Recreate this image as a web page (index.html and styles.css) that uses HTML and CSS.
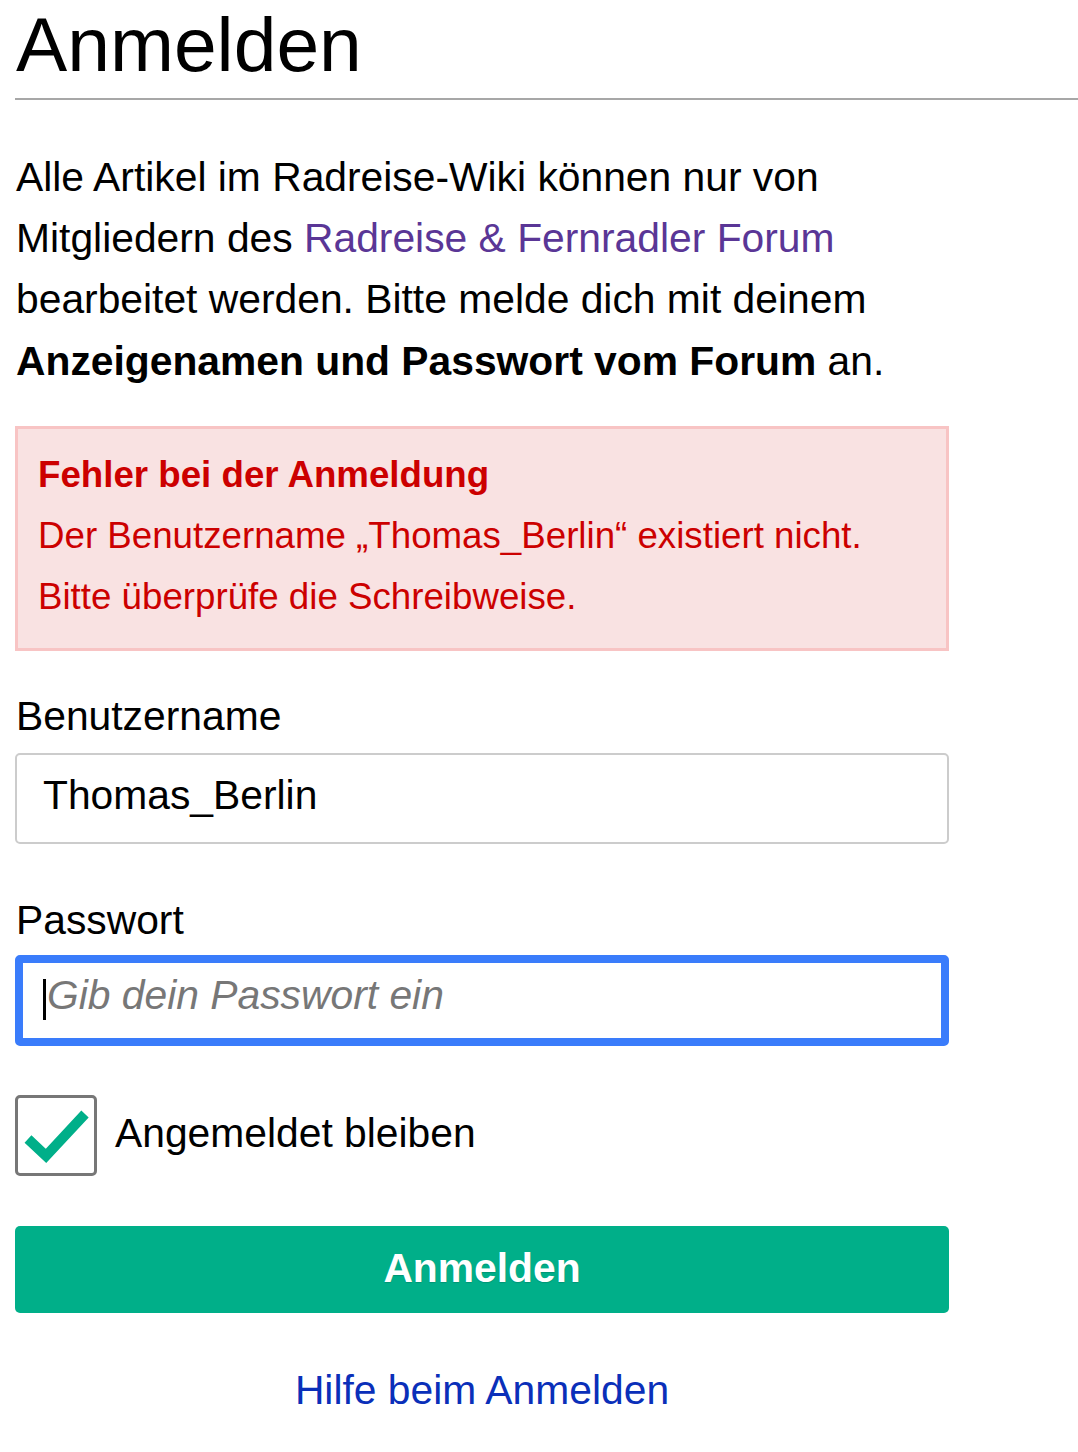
FILE: index.html
```html
<!DOCTYPE html>
<html lang="de">
<head>
<meta charset="utf-8">
<title>Anmelden</title>
<link rel="stylesheet" href="styles.css">
</head>
<body>
<h1 class="page-title">Anmelden</h1>
<div class="login">
  <p class="intro">Alle Artikel im Radreise-Wiki können nur von Mitgliedern des <a class="visited" href="#">Radreise &amp; Fernradler Forum</a> bearbeitet werden. Bitte melde dich mit deinem <strong>Anzeigenamen und Passwort vom Forum</strong> an.</p>
  <div class="errorbox">
    <strong class="error-title">Fehler bei der Anmeldung</strong>
    <div class="error-text">Der Benutzername „Thomas_Berlin“ existiert nicht.<br>Bitte überprüfe die Schreibweise.</div>
  </div>
  <label class="field-label first" for="user">Benutzername</label>
  <input class="field" id="user" type="text" value="Thomas_Berlin">
  <label class="field-label second" for="pass">Passwort</label>
  <div class="field-wrap">
    <input class="field focused" id="pass" type="password" placeholder="Gib dein Passwort ein">
    <span class="caret"></span>
  </div>
  <div class="remember">
    <span class="checkbox">
      <svg width="76" height="76" viewBox="0 0 76 76"><polyline points="10,41 28,58 67,16" fill="none" stroke="#00af89" stroke-width="10" stroke-linecap="butt" stroke-linejoin="miter"/></svg>
    </span>
    <span class="remember-label">Angemeldet bleiben</span>
  </div>
  <button class="submit" type="button">Anmelden</button>
  <div class="help"><a class="help-link" href="#">Hilfe beim Anmelden</a></div>
</div>
</body>
</html>
```
FILE: styles.css
```css
html, body {
  margin: 0;
  padding: 0;
  background: #fff;
}
body {
  padding-left: 15px;
  font-family: "Liberation Sans", Arial, Helvetica, sans-serif;
  font-size: 40.8px;
  line-height: 61.2px;
  color: #000;
}
.page-title {
  margin: 0;
  font-size: 76.8px;
  font-weight: normal;
  line-height: normal;
  padding-bottom: 9px;
  padding-left: 1px;
  border-bottom: 2px solid #a7a7a7;
}
.login {
  width: 934px;
}
.intro {
  margin: 47px 0 0;
  padding-left: 1px;
}
.intro strong { font-weight: bold; }
.visited {
  color: #5a3696;
  text-decoration: none;
}
.errorbox {
  margin-top: 34px;
  background: #f9e2e2;
  border: 3px solid #f8c4c4;
  padding: 15px 20px 21px;
  color: #cc0000;
  font-size: 36.7px;
  line-height: 61.2px;
}
.error-title {
  display: block;
  font-weight: bold;
}
.field-label {
  display: block;
  padding-left: 1px;
}
.field-label.first { margin-top: 35px; }
.field-label.second { margin-top: 46px; }
.field {
  display: block;
  box-sizing: border-box;
  width: 934px;
  height: 91px;
  margin: 5px 0 0;
  padding: 0 26px 5px;
  border: 2.4px solid #cccccc;
  border-radius: 5px;
  font-family: inherit;
  font-size: 40.8px;
  color: #000;
  background: #fff;
  outline: none;
}
.field-wrap {
  position: relative;
  margin-top: 4px;
}
.field.focused {
  margin: 0;
  border: 8.5px solid #3a7cfb;
  padding: 0 24px 10px;
}
.field.focused::placeholder {
  color: #777777;
  font-style: italic;
}
.caret {
  position: absolute;
  left: 28px;
  top: 24px;
  width: 3px;
  height: 41px;
  background: #000;
}
.remember {
  margin-top: 49px;
  display: flex;
  align-items: center;
  gap: 18px;
}
.checkbox {
  box-sizing: border-box;
  width: 82px;
  height: 81px;
  border: 3px solid #777777;
  border-radius: 5px;
  display: block;
  flex: none;
}
.checkbox svg { display: block; }
.remember-label {
  position: relative;
  top: -2px;
}
.submit {
  display: block;
  box-sizing: border-box;
  width: 934px;
  height: 87px;
  margin-top: 50px;
  border: none;
  border-radius: 5px;
  background: #00af89;
  color: #fff;
  font-family: inherit;
  font-size: 40.8px;
  font-weight: bold;
  text-shadow: 0 1px 1px rgba(0,0,0,0.15);
  padding: 0 0 2px;
}
.help {
  margin-top: 47px;
  text-align: center;
}
.help-link {
  color: #0a2fb9;
  text-decoration: none;
}
```
